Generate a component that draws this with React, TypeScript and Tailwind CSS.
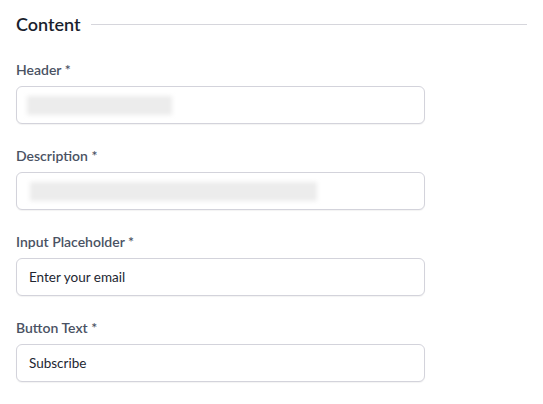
import React from "react";

const fields = [
  { id: "header", label: "Header", value: "", blur: "w-[145px] ml-[10px]" },
  { id: "description", label: "Description", value: "", blur: "w-[287px] ml-[13px]" },
  { id: "placeholder", label: "Input Placeholder", value: "Enter your email" },
  { id: "button", label: "Button Text", value: "Subscribe" },
];

const App = () => {
  return (
    <div className="min-h-screen bg-white px-4 pt-[12px] font-['Lato','Liberation_Sans',sans-serif]">
      <div className="flex items-center gap-[10px]">
        <h2 className="text-[18px] font-semibold text-[#1a1f2e] leading-[24px]">Content</h2>
        <div className="flex-1 h-px bg-[#d6d6dc]" />
      </div>

      <div className="mt-[25px] flex flex-col gap-[23px]">
        {fields.map((f) => (
          <div key={f.id} className="w-[409px]">
            <label className="block text-[14px] font-semibold text-[#4a5263] leading-[18px] mb-[7px]">
              {f.label} *
            </label>
            <div className="h-[38px] rounded-[6px] border border-[#d3d3db] bg-white shadow-[0_1px_1px_rgba(0,0,0,0.05)] flex items-center">
              {f.value ? (
                <span className="pl-3 text-[13.5px] text-[#222631]">{f.value}</span>
              ) : (
                <div className={`${f.blur} h-[19px] bg-[#ececec] blur-[2px]`} />
              )}
            </div>
          </div>
        ))}
      </div>
    </div>
  );
};

export default App;
